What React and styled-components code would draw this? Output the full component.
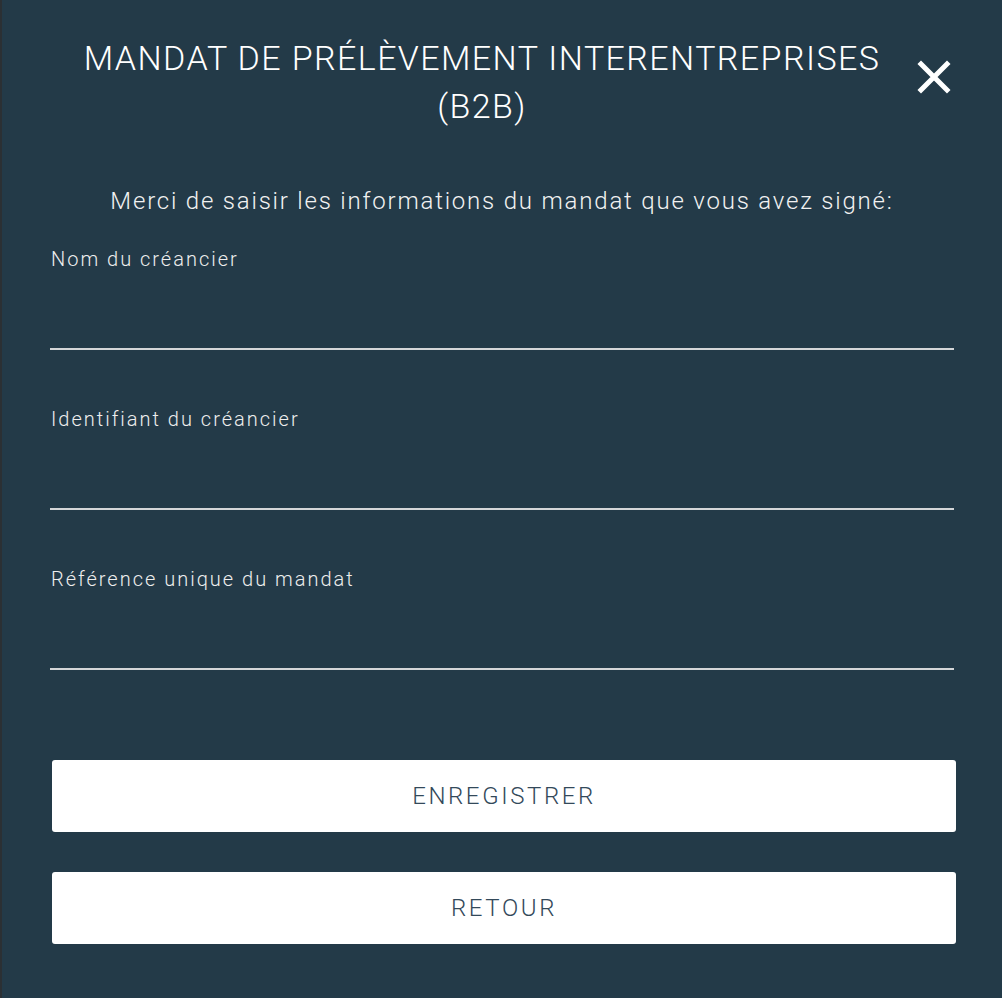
import React from "react";
import styled, { createGlobalStyle } from "styled-components";

const Global = createGlobalStyle`
  html, body { margin: 0; padding: 0; background: #2b3034; }
  body { font-family: Roboto, "Liberation Sans", sans-serif; }
  * { box-sizing: border-box; }
`;

const Panel = styled.div`
  margin-left: 2px;
  min-height: 998px;
  background: #233a48;
  padding: 34px 48px 54px 48px;
  display: flex;
  flex-direction: column;
  color: #fff;
`;

const Header = styled.div`
  display: flex;
  align-items: flex-start;
`;

const Title = styled.h1`
  flex: 1;
  margin: 0;
  text-align: center;
  font-size: 34px;
  line-height: 48px;
  font-weight: 300;
  letter-spacing: 1.4px;
  color: #fff;
`;

const Close = styled.button`
  width: 40px;
  height: 40px;
  margin-top: 23px;
  padding: 0;
  border: none;
  background: transparent;
  display: flex;
  align-items: center;
  justify-content: center;
  cursor: pointer;
`;

const Subtitle = styled.p`
  margin: 56px 0 0 0;
  text-align: center;
  font-size: 24px;
  line-height: 30px;
  font-weight: 300;
  letter-spacing: 1.8px;
  color: #f2f2f2;
`;

const Field = styled.label`
  display: flex;
  flex-direction: column;
  margin-top: ${(p) => p.$gap}px;
`;

const Label = styled.span`
  font-size: 20px;
  line-height: 24px;
  font-weight: 300;
  letter-spacing: 2px;
  color: #eeeeee;
  padding-left: 1px;
`;

const Input = styled.input`
  height: 79px;
  border: none;
  border-bottom: 2px solid #d4d6d8;
  background: transparent;
  outline: none;
  color: #fff;
  font-family: inherit;
  font-size: 20px;
  padding: 0 2px;
`;

const Button = styled.button`
  height: 72px;
  margin: ${(p) => p.$top}px -2px 0 2px;
  border: none;
  border-radius: 3px;
  background: #fff;
  color: #33495a;
  font-family: Roboto, "Liberation Sans", sans-serif;
  font-size: 24px;
  font-weight: 300;
  letter-spacing: 2.6px;
  cursor: pointer;
`;

export default function App() {
  return (
    <>
      <Global />
      <Panel>
        <Header>
          <Title>
            MANDAT DE PRÉLÈVEMENT INTERENTREPRISES
            <br />
            (B2B)
          </Title>
          <Close aria-label="Fermer">
            <svg width="34" height="34" viewBox="0 0 34 34">
              <path
                d="M4 4 L30 30 M30 4 L4 30"
                stroke="#fff"
                strokeWidth="5"
                strokeLinecap="square"
              />
            </svg>
          </Close>
        </Header>
        <Subtitle>Merci de saisir les informations du mandat que vous avez signé:</Subtitle>
        <Field $gap={31}>
          <Label>Nom du créancier</Label>
          <Input type="text" />
        </Field>
        <Field $gap={57}>
          <Label>Identifiant du créancier</Label>
          <Input type="text" />
        </Field>
        <Field $gap={57}>
          <Label>Référence unique du mandat</Label>
          <Input type="text" />
        </Field>
        <Button $top={90}>ENREGISTRER</Button>
        <Button $top={40}>RETOUR</Button>
      </Panel>
    </>
  );
}
